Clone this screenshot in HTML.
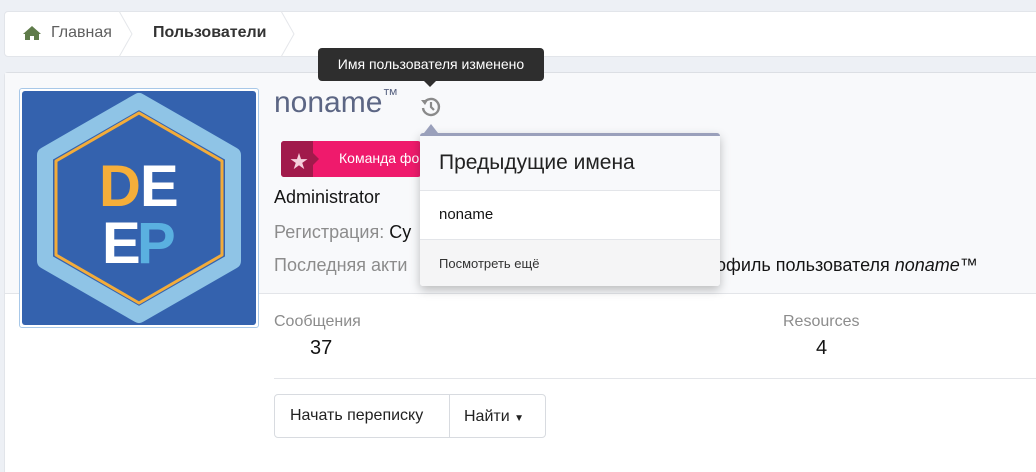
<!DOCTYPE html>
<html><head><meta charset="utf-8"><style>
*{box-sizing:border-box;margin:0;padding:0}
body{width:1036px;height:452px;overflow:hidden;background:#edf0f5;font-family:"Liberation Sans","Noto Sans CJK SC",sans-serif;position:relative;font-size:15px;color:#141414}
.abs{position:absolute}
.bc{left:4px;top:11px;width:1040px;height:46px;background:#fff;border:1px solid #e2e5ea;border-radius:4px}
.main{left:4px;top:72px;width:1040px;height:400px;background:#fff;border-top:1px solid #dcdfe4;border-left:1px solid #e2e5ea;border-radius:4px 0 0 0}
.top{left:5px;top:73px;width:1040px;height:221px;background:#f8f9fb;border-bottom:1px solid #e3e5e9}
.grey{color:#8c8c8c}
</style></head><body>
<div class="abs bc"></div>
<svg class="abs" style="left:22px;top:25px" width="20" height="16" viewBox="0 0 20 16"><path d="M10 1 L1 9 L3 9 L3 15 L8 15 L8 11 L12 11 L12 15 L17 15 L17 9 L19 9 Z" fill="#5f7b4a"/></svg>
<div class="abs" style="left:51px;top:24px;color:#5f5f5f;font-size:16px">Главная</div>
<svg class="abs" style="left:118px;top:11px" width="20" height="46"><path d="M1 0 L14 23 L1 46" stroke="#e5e7eb" fill="none"/></svg>
<div class="abs" style="left:153px;top:24px;color:#333;font-size:16px;font-weight:bold">Пользователи</div>
<svg class="abs" style="left:280px;top:11px" width="20" height="46"><path d="M1 0 L14 23 L1 46" stroke="#e5e7eb" fill="none"/></svg>
<div class="abs main"></div>
<div class="abs top"></div>
<div class="abs" style="left:19px;top:88px;width:240px;height:240px;border:1px solid #a8c8e8;border-radius:3px;background:#fff;padding:2px">
<svg width="234" height="234" viewBox="0 0 234 234"><rect width="234" height="234" rx="3" fill="#3462ae"/>
<polygon points="117,10 211,64 211,170 117,224 23,170 23,64" fill="none" stroke="#8fc4e6" stroke-width="16" stroke-linejoin="round"/>
<polygon points="117,22 200,70 200,164 117,212 34,164 34,70" fill="none" stroke="#f3ac3a" stroke-width="3" stroke-linejoin="round"/>
<text x="77" y="115" font-family="Liberation Sans Narrow, Liberation Sans" font-weight="bold" font-size="58" fill="#f5ae3a">D</text>
<text x="118" y="115" font-family="Liberation Sans Narrow, Liberation Sans" font-weight="bold" font-size="58" fill="#fff">E</text>
<text x="80" y="172" font-family="Liberation Sans Narrow, Liberation Sans" font-weight="bold" font-size="58" fill="#fff">E</text>
<text x="115" y="172" font-family="Liberation Sans Narrow, Liberation Sans" font-weight="bold" font-size="58" fill="#5ab0e0">P</text>
</svg></div>
<div class="abs" style="left:274px;top:86px;font-size:30px;color:#5c6684">noname<sup style="font-size:16px;vertical-align:12px">™</sup></div>
<svg class="abs" style="left:419px;top:95px" width="24" height="24" viewBox="0 0 24 24"><path d="M5 8 A8 8 0 1 1 4 13" fill="none" stroke="#8a8a8a" stroke-width="2.4"/><path d="M2 5 L6 10 L9 5Z" fill="#8a8a8a"/><path d="M12 7 V12 L15 15" fill="none" stroke="#8a8a8a" stroke-width="2.2"/></svg>
<div class="abs" style="left:318px;top:48px;width:226px;height:33px;background:#2e2e2e;border-radius:4px;color:#fff;font-size:14px;line-height:33px;text-align:center">Имя пользователя изменено</div>
<div class="abs" style="left:424px;top:81px;border:6px solid transparent;border-top-color:#2e2e2e"></div>
<div class="abs" style="left:281px;top:141px;width:140px;height:36px;background:#ef1a6c;border-radius:3px"></div>
<div class="abs" style="left:281px;top:141px;width:32px;height:36px;background:#a11a4b;border-radius:3px 0 0 3px"></div>
<div class="abs" style="left:313px;top:153px;border:6px solid transparent;border-left-color:#a11a4b"></div>
<div class="abs" style="left:290px;top:148px;color:#f5d0dc;font-size:18px">★</div>
<div class="abs" style="left:339px;top:150px;color:#fff;font-size:14px">Команда фо</div>
<div class="abs" style="left:274px;top:187px;font-size:18px">Administrator</div>
<div class="abs" style="left:274px;top:222px;font-size:18px"><span class="grey">Регистрация:</span> Су</div>
<div class="abs" style="left:274px;top:255px;font-size:18px" ><span class="grey">Последняя акти</span></div>
<div class="abs" style="left:716px;top:255px;font-size:18px">офиль пользователя <i>noname™</i></div>
<div class="abs" style="left:274px;top:313px;font-size:16px;color:#8c8c8c">Сообщения</div>
<div class="abs" style="left:310px;top:337px;font-size:20px">37</div>
<div class="abs" style="left:783px;top:313px;font-size:16px;color:#8c8c8c">Resources</div>
<div class="abs" style="left:816px;top:337px;font-size:20px">4</div>
<div class="abs" style="left:274px;top:378px;width:762px;height:1px;background:#e3e5e9"></div>
<div class="abs" style="left:274px;top:394px;width:272px;height:44px;border:1px solid #d8dbe0;border-radius:4px;background:#fff"></div>
<div class="abs" style="left:449px;top:395px;width:1px;height:42px;background:#d8dbe0"></div>
<div class="abs" style="left:290px;top:407px;font-size:16px;color:#222">Начать переписку</div>
<div class="abs" style="left:464px;top:408px;font-size:16px;color:#222">Найти <span style="font-size:10px">▼</span></div>
<div class="abs" style="left:420px;top:133px;width:300px;height:153px;background:#fff;border-top:3px solid #9aa0bb;border-radius:3px;box-shadow:0 4px 10px rgba(0,0,0,.25)"></div>
<div class="abs" style="left:424px;top:124px;border:6px solid transparent;border-bottom-color:#9aa0bb;border-width:0 7px 9px 7px"></div>
<div class="abs" style="left:420px;top:136px;width:300px;height:55px;background:#f8f9fb;border-bottom:1px solid #e3e5e9"></div>
<div class="abs" style="left:439px;top:151px;font-size:21px;color:#222">Предыдущие имена</div>
<div class="abs" style="left:439px;top:206px;font-size:15px">noname</div>
<div class="abs" style="left:420px;top:239px;width:300px;height:47px;background:#f5f5f6;border-top:1px solid #e3e5e9;border-radius:0 0 3px 3px"></div>
<div class="abs" style="left:439px;top:256px;font-size:13px;color:#333">Посмотреть ещё</div>
</body></html>
